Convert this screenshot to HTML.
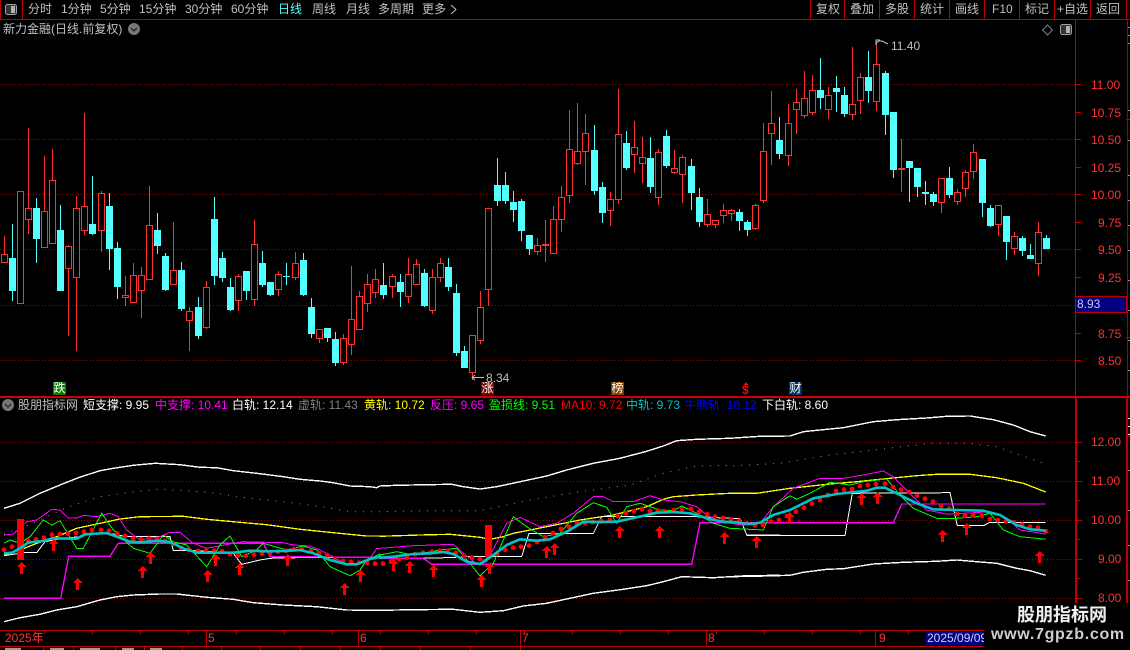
<!DOCTYPE html>
<html><head><meta charset="utf-8">
<style>
html,body{margin:0;padding:0;background:#000;}
#r{position:relative;width:1130px;height:650px;overflow:hidden;background:#000;font:12px/14px "Liberation Sans","WenQuanYi Zen Hei","Noto Sans CJK SC",sans-serif;color:#c0c0c0;}
#r div.t{position:absolute;white-space:nowrap;height:14px;}
svg{position:absolute;left:0;top:0;}
.rd{color:#ff3232;}
.box{position:absolute;width:13px;height:13px;color:#fff;font-size:12px;line-height:13px;text-align:center;overflow:hidden;}
</style></head><body><div id="r">
<svg id="s" width="1130" height="650" viewBox="0 0 1130 650"></svg>

<div class="t" style="left:28px;top:2px">分时</div>
<div class="t" style="left:61px;top:2px">1分钟</div>
<div class="t" style="left:100px;top:2px">5分钟</div>
<div class="t" style="left:139px;top:2px">15分钟</div>
<div class="t" style="left:185px;top:2px">30分钟</div>
<div class="t" style="left:231px;top:2px">60分钟</div>
<div class="t" style="left:278px;top:2px;color:#54ffff">日线</div>
<div class="t" style="left:312px;top:2px">周线</div>
<div class="t" style="left:346px;top:2px">月线</div>
<div class="t" style="left:378px;top:2px">多周期</div>
<div class="t" style="left:422px;top:2px">更多</div>
<div class="t" style="left:816px;top:2px">复权</div>
<div class="t" style="left:850px;top:2px">叠加</div>
<div class="t" style="left:885px;top:2px">多股</div>
<div class="t" style="left:920px;top:2px">统计</div>
<div class="t" style="left:955px;top:2px">画线</div>
<div class="t" style="left:992px;top:2px">F10</div>
<div class="t" style="left:1025px;top:2px">标记</div>
<div class="t" style="left:1057px;top:2px">+自选</div>
<div class="t" style="left:1096px;top:2px">返回</div>

<div class="t" style="left:3px;top:22px">新力金融(日线.前复权)</div>

<div class="t" style="left:891px;top:39px">11.40</div>
<div class="t" style="left:486px;top:371px">8.34</div>

<div class="t rd" style="left:1091px;top:78px">11.00</div>
<div class="t rd" style="left:1091px;top:106px">10.75</div>
<div class="t rd" style="left:1091px;top:133px">10.50</div>
<div class="t rd" style="left:1091px;top:161px">10.25</div>
<div class="t rd" style="left:1091px;top:188px">10.00</div>
<div class="t rd" style="left:1098px;top:216px">9.75</div>
<div class="t rd" style="left:1098px;top:243px">9.50</div>
<div class="t rd" style="left:1098px;top:271px">9.25</div>
<div class="t rd" style="left:1098px;top:327px">8.75</div>
<div class="t rd" style="left:1098px;top:354px">8.50</div>
<div class="t" style="left:1077px;top:297px;color:#c8c8ff">8.93</div>

<div class="box" style="left:53px;top:382px;background:#008000">跌</div>
<div class="box" style="left:481px;top:382px;background:#800000">涨</div>
<div class="box" style="left:611px;top:382px;background:#804000">榜</div>
<div class="box" style="left:789px;top:382px;background:#003366">财</div>
<div class="t" style="left:742px;top:383px;color:#ff0000;font-weight:bold">$</div>

<div class="t" style="left:18px;top:398px">股朋指标网</div>
<div class="t" style="left:83px;top:398px;color:#fff">短支撑: 9.95</div>
<div class="t" style="left:155px;top:398px;color:#ff00ff">中支撑: 10.41</div>
<div class="t" style="left:232px;top:398px;color:#fff">白轨: 12.14</div>
<div class="t" style="left:298px;top:398px;color:#808080">虚轨: 11.43</div>
<div class="t" style="left:364px;top:398px;color:#ffff00">黄轨: 10.72</div>
<div class="t" style="left:430px;top:398px;color:#ff00ff">反压: 9.65</div>
<div class="t" style="left:489px;top:398px;color:#00ff00">盈损线: 9.51</div>
<div class="t" style="left:561px;top:398px;color:#ff0000">MA10: 9.72</div>
<div class="t" style="left:626px;top:398px;color:#00c4c4">中轨: 9.73</div>
<div class="t" style="left:684px;top:398px;color:#0000ff">牛熊轨: 10.12</div>
<div class="t" style="left:762px;top:398px;color:#fff">下白轨: 8.60</div>

<div class="t rd" style="left:1091px;top:435px">12.00</div>
<div class="t rd" style="left:1091px;top:474px">11.00</div>
<div class="t rd" style="left:1091px;top:513px">10.00</div>
<div class="t rd" style="left:1098px;top:552px">9.00</div>
<div class="t rd" style="left:1098px;top:591px">8.00</div>

<div class="t rd" style="left:5px;top:631px">2025年</div>
<div class="t rd" style="left:208px;top:631px">5</div>
<div class="t rd" style="left:360px;top:631px">6</div>
<div class="t rd" style="left:522px;top:631px">7</div>
<div class="t rd" style="left:708px;top:631px">8</div>
<div class="t rd" style="left:879px;top:631px">9</div>
<div style="position:absolute;left:926px;top:632px;width:70px;height:13px;background:#000080;color:#d0d0ff;line-height:13px;overflow:hidden;white-space:nowrap;padding-left:1px">2025/09/09</div>

<div style="position:absolute;left:984px;top:603px;width:146px;height:47px;background:#000"></div>
<div class="t" style="left:1017px;top:602px;height:24px;line-height:24px;font-size:18px;font-weight:bold;color:#f0f0f0;font-family:'Noto Sans CJK SC','WenQuanYi Zen Hei',sans-serif">股朋指标网</div>
<div class="t" style="left:991px;top:626px;height:18px;line-height:18px;font-size:16px;font-weight:bold;color:#cfcfcf;letter-spacing:.7px">www.7gpzb.com</div>
</div>
<script>
(function(){
var o=[];
var RED='#ff3232',CY='#54ffff',DR='#b00000';
function rect(x,y,w,h,c){o.push('<rect x="'+x+'" y="'+y+'" width="'+w+'" height="'+h+'" fill="'+c+'"/>');}
function dots(y,x2,c){o.push('<line x1="0" x2="'+x2+'" y1="'+(y+.5)+'" y2="'+(y+.5)+'" stroke="'+(c||'#a00000')+'" stroke-dasharray="1 2"/>');}
[84,139,194,249,305,360,442,481,520,559,598].forEach(function(y){dots(y,1075);});

/* candles: [zx, type, wickTop, bodyTop, bodyBottom, wickBottom] in zoom coordinates */
function cs(ox,oy,list){
 list.forEach(function(a){
  var x=Math.floor(ox+a[0]/3),r=a[1]=='r',c=r?RED:CY;
  var wt=Math.round(oy+a[2]/3),bt=Math.round(oy+a[3]/3),bb=Math.round(oy+a[4]/3),wb=Math.round(oy+a[5]/3);
  if(wt<bt)rect(x,wt,1,bt-wt,c);
  if(wb>bb)rect(x,bb,1,wb-bb,c);
  if(r){
    if(bb-bt<2){rect(x-3,bt,7,2,c);}
    else o.push('<rect x="'+(x-2.5)+'" y="'+(bt+.5)+'" width="6" height="'+(bb-bt-1)+'" fill="#000" stroke="'+c+'"/>');
  } else rect(x-3,bt,7,Math.max(bb-bt,1),c);
 });
}
cs(0,110,[[13,'r',378,433,458,458],[37,'c',342,444,543,572],[61,'r',244,244,581,581],[85,'r',54,295,329,372],[109,'c',264,294,387,459],[133,'r',138,304,413,413],[157,'r',117,211,401,401],[181,'c',285,360,543,543],[205,'r',405,409,476,678],[229,'r',258,295,503,723],[253,'r',9,289,362,375],[277,'c',198,342,372,375],[304,'r',243,250,362,426],[328,'c',249,288,417,480],[352,'c',396,414,531,567],[376,'r',498,556,563,588],[400,'r',459,496,578,578],[424,'r',471,496,542,624],[448,'r',228,346,509,509],[472,'c',309,360,408,432],[496,'c',429,438,540,543],[520,'r',336,481,524,524],[544,'c',456,480,597,603],[568,'r',591,604,632,723],[595,'c',561,591,678,687],[619,'r',513,532,653,657],[643,'c',261,327,498,525],[667,'c',426,444,504,516],[691,'c',504,531,600,603],[715,'r',492,499,572,603],[739,'c',483,483,543,570],[763,'r',330,403,569,588],[787,'c',423,459,525,531]]);
cs(265,130,[[16,'c',456,456,495,498],[40,'r',423,433,479,498],[64,'c',399,438,441,465],[91,'r',366,400,443,450],[115,'c',369,390,495,498],[139,'c',504,531,612,624],[163,'r',598,598,627,639],[187,'c',594,594,624,636],[211,'c',606,627,699,708],[235,'r',612,625,698,705],[259,'r',408,568,644,675],[283,'r',483,499,599,600],[307,'r',432,463,521,546],[331,'r',417,448,488,504],[355,'c',399,465,495,507],[382,'r',432,439,470,504],[406,'c',432,456,486,531],[430,'r',384,433,500,519],[454,'r',387,403,464,465],[478,'c',417,429,528,531],[502,'r',417,442,542,552],[526,'r',384,400,443,456],[550,'c',384,411,471,483],[574,'c',462,489,669,678],[598,'c',648,663,714,714],[622,'r',615,616,728,750],[646,'r',483,532,632,642],[670,'r',235,235,479,528],[697,'c',84,165,213,228],[721,'c',126,165,213,222],[745,'c',183,216,240,276],[769,'c',207,213,303,333],[793,'c',315,316,357,375]]);
cs(530,80,[[22,'r',474,496,515,525],[46,'r',420,493,499,546],[70,'r',378,418,521,522],[94,'r',318,352,419,456],[118,'r',90,208,347,369],[142,'r',69,214,251,255],[166,'r',102,160,215,315],[193,'c',135,210,333,345],[217,'c',306,321,399,429],[241,'r',336,358,392,438],[265,'r',27,163,359,372],[289,'c',153,189,264,270],[313,'r',123,202,224,279],[337,'r',171,232,251,309],[361,'c',171,234,321,339],[385,'r',207,217,353,375],[409,'c',150,168,258,264],[433,'r',210,265,278,282],[457,'r',225,232,284,369],[484,'c',237,258,339,390],[508,'c',324,351,426,441],[532,'r',357,403,434,441],[556,'r',420,421,434,444],[580,'r',372,391,407,429],[604,'r',387,391,401,423],[628,'c',387,396,423,453],[652,'c',420,426,450,468],[676,'r',372,376,446,450],[700,'r',129,214,362,369],[724,'r',33,130,161,255],[748,'c',111,180,222,237],[775,'r',72,130,227,258]]);
cs(795,40,[[4,'r',147,187,209,282],[28,'r',93,175,227,233],[52,'r',105,151,218,225],[76,'c',54,150,174,207],[100,'r',141,166,209,237],[124,'c',108,144,156,216],[148,'c',141,165,222,231],[172,'r',21,193,224,240],[196,'r',99,112,182,222],[220,'c',33,111,153,189],[244,'r',3,73,185,213],[271,'c',93,99,225,285],[295,'c',216,216,390,414],[319,'r',297,384,389,456],[343,'c',363,363,384,486],[367,'c',384,384,441,471],[391,'c',423,456,462,495],[415,'c',456,462,486,498],[439,'r',415,415,488,519],[463,'c',381,414,465,474],[487,'r',447,457,485,495],[511,'r',390,397,446,471],[535,'r',312,337,395,417],[562,'c',357,357,489,531],[586,'c',495,504,558,561],[610,'r',496,496,554,588],[634,'c',528,528,606,660],[658,'r',576,589,627,645],[682,'c',588,594,633,648],[706,'c',612,645,657,657],[730,'r',546,577,671,708],[754,'c',585,594,627,627]]);

/* convert line sections: [[ox,[x,y,...]],...] */
function pts(secs){var r=[];secs.forEach(function(s){var a=s[1];for(var i=0;i<a.length;i+=2){r.push((s[0]+a[i]/3).toFixed(1)+','+(380+a[i+1]/3).toFixed(1));}});return r.join(' ');}
function pl(secs,c,w,extra){o.push('<polyline fill="none" stroke="'+c+'" stroke-width="'+w+'" points="'+pts(secs)+'" '+(extra||'shape-rendering="crispEdges"')+'/>');}

/* blue dotted */
pl([[0,[12,585,130,548,230,510,300,495,420,480,550,460,700,490,850,495,950,510,1130,530]],[380,[440,515,560,490,700,455,840,430,1000,410,1200,410]],[730,[200,400,320,385,480,370,700,358,800,360,947,405]]],'#0000ff',1,'stroke-dasharray="1 7"');
/* gray dotted */
pl([[0,[12,462,100,430,200,382,300,350,400,335,480,328,560,332,650,340,750,355,850,365,950,378,1050,395,1140,395]],[380,[0,395,150,392,300,392,450,360,600,335,750,315,850,280,950,258,1050,256]],[730,[0,258,150,250,300,225,450,208,600,190,720,190,800,200,950,253]]],'#909090',1,'stroke-dasharray="1 7"');
/* upper white */
pl([[0,[12,385,60,370,120,340,180,315,235,293,300,272,340,265,400,256,465,250,540,254,600,262,650,263,700,272,770,280,850,290,900,298,960,303,1000,308,1050,318,1110,320,1130,323]],[380,[0,318,50,316,140,314,215,313,250,320,300,327,350,320,430,303,500,288,560,270,640,250,720,235,800,214,850,198,890,182,950,178,1050,175]],[730,[90,169,180,168,220,155,300,147,340,143,430,125,500,119,590,114,650,109,720,108,790,119,850,135,900,155,947,168]]],'#fff',1.4);
/* lower white */
pl([[0,[12,725,60,713,120,703,170,690,230,680,300,660,350,650,400,645,480,642,530,642,620,652,700,658,760,668,850,675,950,680,1040,690,1130,691,1140,691]],[380,[0,691,100,689,220,688,300,697,370,692,430,678,500,670,570,655,640,640,730,628,800,617,850,605,905,590,1000,593,1100,587,1200,586]],[730,[0,590,70,589,180,586,220,577,290,568,340,566,430,552,520,547,620,544,680,540,740,545,800,550,860,565,900,572,947,586]]],'#fff',1.4);
/* yellow */
pl([[0,[12,525,60,510,110,490,170,470,230,445,300,430,360,417,420,410,550,409,620,418,700,425,800,434,900,448,1000,458,1100,468,1140,468]],[380,[0,469,120,465,210,463,300,472,330,478,370,470,400,460,500,440,600,420,700,405,800,380,850,358,880,350,950,345,1050,340]],[730,[80,340,180,325,300,312,380,305,480,295,560,287,620,283,720,283,800,293,880,310,947,336]]],'#ffff00',1.3);
/* white step */
pl([[0,[12,527,70,518,110,518,135,485,190,475,240,470,260,462,340,462,380,470,510,470,520,512,600,512,700,520,725,553,780,540,810,535,950,532,1140,532]],[380,[0,535,210,533,250,530,425,529,447,460,640,460,665,410,950,410,1050,415,1080,415,1100,465,1200,465]],[730,[50,466,345,466,367,340,660,338,682,437,760,437,780,427,947,427]]],'#fff',1);
/* magenta step */
pl([[0,[12,655,182,655,206,529,330,529,355,490,790,490,810,530,1140,532]],[380,[0,535,130,535,155,553,935,553,960,428,1050,428]],[730,[490,428,515,372,947,372]]],'#ff00ff',1.4);
/* thin magenta */
pl([[0,[12,465,40,462,80,425,110,420,155,388,180,390,205,414,230,414,250,406,290,410,330,400,355,410,380,450,420,480,480,470,510,457,540,457,580,490,620,505,700,490,730,485,850,488,880,495,930,498,960,510,1000,530,1040,555,1070,550,1110,535,1130,505,1140,505]],[380,[0,505,100,497,220,493,250,520,290,552,320,545,380,430,420,412,480,440,530,430,580,400,640,350,670,350,700,365,760,365,810,347,850,360,900,365,950,380,980,405,1020,425,1050,430]],[730,[40,435,90,430,130,380,190,325,270,295,340,295,400,285,460,273,490,290,540,340,590,390,650,402,700,400,780,395,830,415,870,450,947,462]]],'#ff00ff',1);
/* green */
pl([[0,[12,490,30,480,60,490,90,470,130,420,155,435,180,422,230,505,250,505,305,400,340,450,400,505,450,520,490,465,520,485,560,495,620,560,660,495,690,468,725,530,770,510,790,490,860,510,910,498,950,510,990,560,1050,587,1080,570,1100,540,1140,522]],[380,[0,525,50,515,100,525,180,510,230,505,270,550,300,588,340,550,400,410,440,440,490,470,540,460,590,400,640,368,680,382,710,430,740,380,780,370,840,390,880,392,905,378,950,400,1000,430,1050,445]],[730,[100,450,130,380,180,347,200,358,240,340,300,307,360,315,400,305,470,297,510,345,550,385,620,415,680,415,740,410,780,400,820,450,870,470,947,478]]],'#00ff00',1);
/* red bars */
rect(17,519,7,41,'#ff0000');rect(485,525,7,32,'#ff0000');
/* MA10 dots */
function rd(ox,a){for(var i=0;i<a.length;i+=2){o.push('<circle cx="'+(ox+a[i]/3).toFixed(1)+'" cy="'+(380+a[i+1]/3).toFixed(1)+'" r="2.4" fill="#ff0000"/>');}}
rd(0,[12,509,36,500,60,492,84,482,108,478,132,473,156,464,180,462,204,461,228,459,252,455,276,450,303,450,327,452,351,460,375,468,399,476,423,478,447,476,471,477,495,482,519,491,543,504,567,510,594,513,618,512,642,512,666,514,690,522,714,527,738,527,762,524,786,521,810,520,834,515,858,512,882,508,906,508,933,514,957,519,981,525,1005,537,1029,543,1053,546,1077,548,1101,549,1125,551]);
rd(380,[9,551,33,545,57,538,81,533,105,523,129,518,156,515,180,512,204,513,228,518,252,528,276,533,300,537,324,530,351,522,375,509,399,503,423,500,447,497,471,486,495,471,519,459,543,447,567,440,591,430,615,429,639,426,663,423,690,420,714,408,738,399,762,393,786,387,810,393,834,392,858,395,882,390,906,388,933,387,957,396,981,403,1005,410,1029,414]);
rd(730,[3,418,27,422,51,430,75,436,99,435,123,425,147,420,171,408,198,395,222,383,246,371,270,360,294,345,318,333,342,329,366,327,390,318,414,315,438,312,465,311,489,321,513,329,537,336,561,347,585,356,609,365,633,378,657,386,681,402,705,407,729,405,756,407,780,417,804,420,828,424,852,427,876,434,900,440,924,443,948,454]);
/* cyan mid */
pl([[0,[12,520,36,518,60,505,84,488,108,485,135,482,156,475,230,476,255,463,320,459,350,470,390,485,420,487,470,482,510,486,550,505,590,518,650,518,700,518,750,512,800,514,860,513,900,510,940,520,990,540,1040,553,1070,553,1110,537,1140,530]],[380,[0,533,40,530,100,522,150,520,190,516,220,522,260,545,300,552,340,525,380,495,420,478,470,482,510,478,560,455,610,425,660,426,710,425,770,412,830,398,880,396,930,400,1000,420,1040,426]],[730,[0,425,60,432,90,428,130,405,180,390,250,355,320,342,410,332,440,323,465,323,510,345,560,370,610,388,680,390,760,392,810,405,860,435,900,448,947,452]]],'#00c4c4',2.6,'stroke-linejoin="round"');
/* arrows */
function ar(ox,a){for(var i=0;i<a.length;i+=2){var x=Math.round(ox+a[i]/3),y=Math.round(380+a[i+1]/3);
 o.push('<path shape-rendering="crispEdges" fill="#ff0000" d="M'+(x+.5)+' '+y+'L'+(x+5.5)+' '+(y+5)+'H'+(x+2)+'V'+(y+12)+'H'+(x-1)+'V'+(y+5)+'H'+(x-4.5)+'Z"/>');}}
ar(0,[62,545,158,478,230,595,426,558,450,515,620,570,645,522,716,550,860,522,1032,610,1080,570,1178,537]);
ar(380,[39,538,87,544,159,556,303,586,327,546,497,498,521,490,716,438,837,438,1031,457,1127,467]);
ar(730,[78,467,177,397,392,340,441,337,636,449,708,430,927,514]);

/* frame */
var F='#c00000';
rect(0,19,1130,1,F);
rect(0,0,1,19,F);rect(22,0,1,19,F);
[810,844,879,914,949,984,1019,1054,1090,1126].forEach(function(x){rect(x,0,1,19,F);});
rect(0,396,1130,2,'#d00000');
rect(1075,20,1,376,F);
rect(1075,398,2,232,F);
rect(1127,20,1,376,'#a00000');
rect(1126,398,2,205,F);
rect(0,630,1130,1,F);
rect(0,646,1130,1,F);
/* axis ticks */
[84,112,139,167,194,222,249,277,305,333,360].forEach(function(y){rect(1076,y,5,1,F);});
[442,481,520,559,598].forEach(function(y){rect(1077,y,5,1,F);});
[461,500,539,578].forEach(function(y){rect(1077,y,3,1,F);});
/* right strip */
[27,35,43,110,140,175,200,225,250,280,310,340,370,470,510,545,580].forEach(function(y){rect(1128,y,2,1,'#909090');});
rect(1126,119,4,1,F);rect(1126,337,4,1,F);
rect(1128,418,2,1,'#fff');rect(1128,426,2,1,'#fff');rect(1128,434,2,1,'#fff');rect(1127,436,3,1,F);
/* price box */
o.push('<rect x="1075.5" y="296.5" width="51" height="16" fill="#000080" stroke="#c00000"/>');
/* $ arrow top */
o.push('<path d="M746 382L748.5 385H743.5Z" fill="#ff0000"/>');
/* date separators */
[206,358,520,706,875].forEach(function(x){rect(x,630,1,16,F);});
for(var tx=44;tx<1000;tx+=48){rect(tx,631,1,3,F);}
/* bottom row */
[43,73,115,144,182,221,260,300,340,380,420,470,520].forEach(function(x){rect(x,646,1,4,F);});
[[5,16],[50,14],[80,20],[122,12],[150,12]].forEach(function(a){rect(a[0],648,a[1],2,'#9a9a9a');});
/* top-left icon */
o.push('<rect x="5.5" y="4.5" width="11" height="10" rx="2" fill="#333" stroke="#a0a0a0"/><rect x="11" y="6" width="4" height="7" fill="#b0b0b0"/>');
/* more chevron */
o.push('<path d="M451 5L456 9.5L451 14" fill="none" stroke="#c0c0c0"/>');
/* title circle */
o.push('<circle cx="134" cy="29" r="6" fill="#777"/><path d="M131 28L134 31L137 28" fill="none" stroke="#222" stroke-width="1.3"/>');
/* diamond + square */
o.push('<path d="M1047.5 25L1052.5 30L1047.5 35L1042.5 30Z" fill="none" stroke="#808080"/>');
o.push('<rect x="1060.5" y="24.5" width="11" height="10" rx="2" fill="#333" stroke="#a0a0a0"/><rect x="1066" y="26" width="4" height="7" fill="#b0b0b0"/>');
/* indicator circle */
o.push('<circle cx="8" cy="405" r="6" fill="#777"/><path d="M5 404L8 407L11 404" fill="none" stroke="#222" stroke-width="1.3"/>');
/* high/low markers */
o.push('<path d="M876 45V40H880M876 43L879 41H882L888 44" fill="none" stroke="#c0c0c0"/>');
o.push('<path d="M484 377.5H472M475 375L472 377.5L475 380" fill="none" stroke="#c0c0c0"/>');
document.getElementById('s').innerHTML=o.join('');
})();
</script>
</body></html>
